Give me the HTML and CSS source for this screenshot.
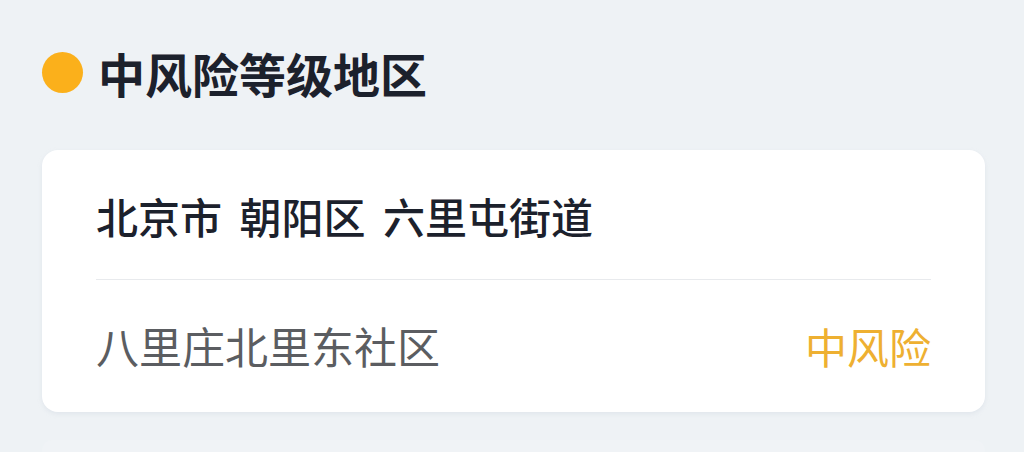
FILE: index.html
```html
<!DOCTYPE html>
<html lang="zh-CN">
<head>
<meta charset="utf-8">
<title>中风险等级地区</title>
<link rel="stylesheet" href="styles.css">
</head>
<body>
<section class="level">
  <h2 class="level-head"><span class="dot"></span><span class="level-title">中风险等级地区</span></h2>
  <div class="card">
    <div class="card-title">北京市 朝阳区 六里屯街道</div>
    <div class="card-row">
      <span class="place">八里庄北里东社区</span>
      <span class="risk">中风险</span>
    </div>
  </div>
  <div class="card card-next"></div>
</section>
</body>
</html>
```
FILE: styles.css
```css
html, body {
  margin: 0;
  padding: 0;
  background: #eef2f5;
  font-family: "Noto Sans CJK SC", "Noto Sans", sans-serif;
}
body {
  height: 452px;
  overflow: hidden;
}
.level {
  padding: 44px 39px 0 42px;
}
.level-head {
  margin: 0;
  height: 56px;
  display: flex;
  align-items: center;
  gap: 15px;
}
.dot {
  width: 41px;
  height: 41px;
  border-radius: 50%;
  background: #fbb01b;
  flex: none;
}
.level-title {
  font-size: 47px;
  font-weight: 700;
  color: #1c212c;
  line-height: 1;
}
.card {
  margin-top: 50px;
  background: #ffffff;
  border-radius: 16px;
  padding: 0 54px;
  box-shadow: 0 2px 4px rgba(200, 210, 220, 0.35);
}
.card-title {
  font-size: 42px;
  font-weight: 500;
  color: #1c212c;
  line-height: 1;
  padding: 45px 0 42px;
  border-bottom: 1px solid #e8eaed;
  word-spacing: 8px;
}
.card-row {
  display: flex;
  justify-content: space-between;
  align-items: center;
  padding: 44px 0 45px;
  line-height: 1;
}
.place {
  font-size: 43px;
  color: #5b5d61;
}
.risk {
  font-size: 42px;
  color: #eeb031;
}
.card-next {
  margin-top: 28px;
  height: 20px;
  background: #f0f3f6;
  box-shadow: none;
}
```
